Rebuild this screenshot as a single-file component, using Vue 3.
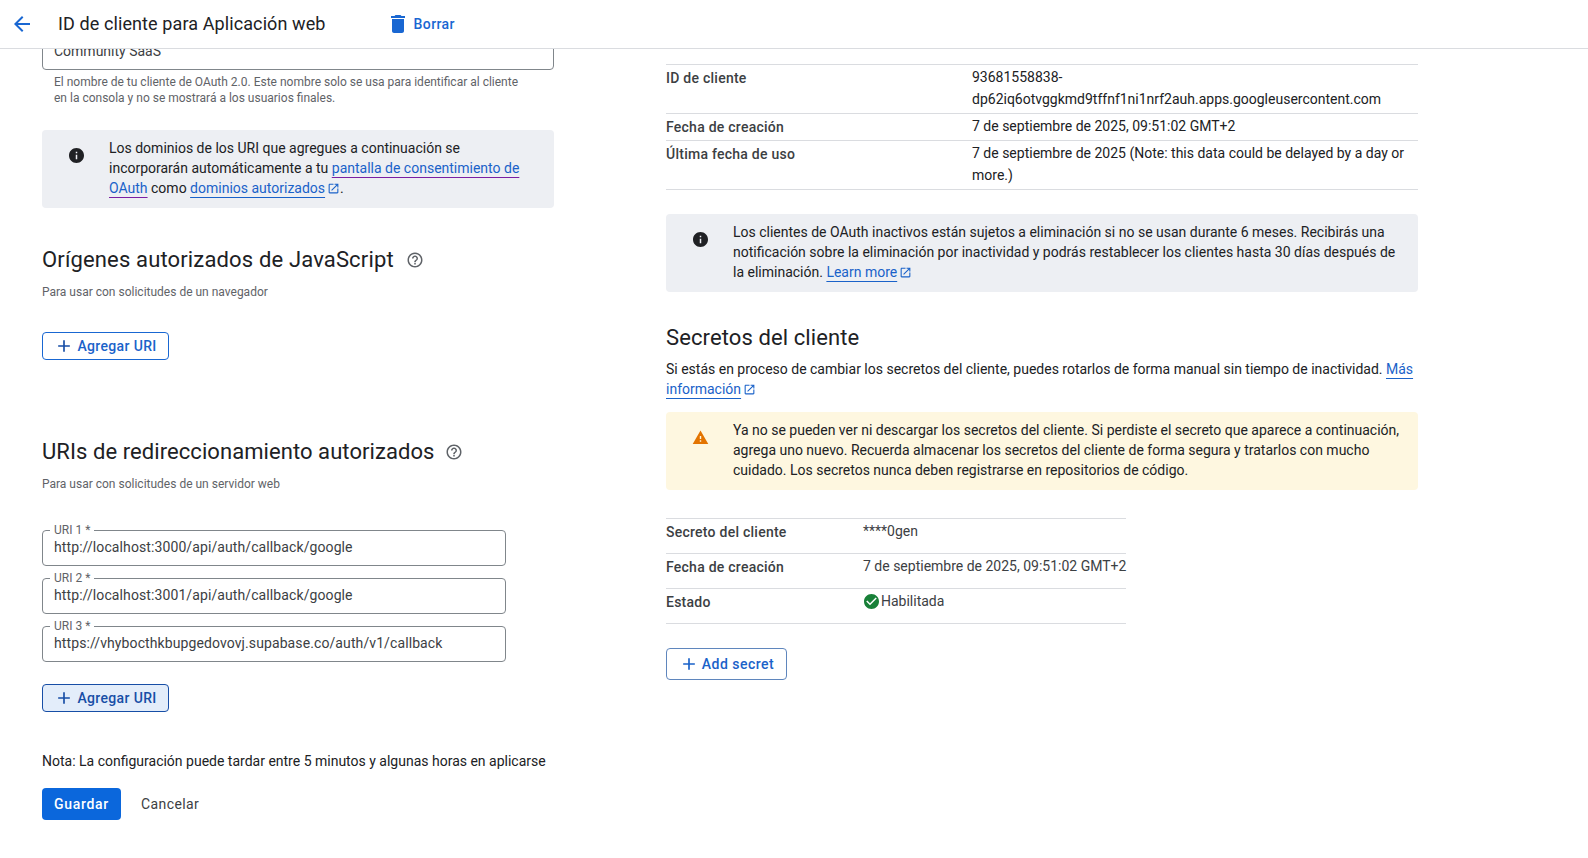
<template>
  <div class="page">
    <header class="topbar">
      <svg class="topbar__back" viewBox="0 0 24 24" aria-hidden="true"><path :d="icons.back" /></svg>
      <h1 class="topbar__title">ID de cliente para Aplicación web</h1>
      <button class="topbar__delete" type="button">
        <svg viewBox="0 0 24 24" aria-hidden="true"><path :d="icons.trash" /></svg>
        Borrar
      </button>
    </header>

    <main class="content">
      <section class="form">
        <div class="name-field">Community SaaS</div>
        <p class="hint">
          El nombre de tu cliente de OAuth 2.0. Este nombre solo se usa para identificar al cliente
          en la consola y no se mostrará a los usuarios finales.
        </p>

        <div class="notice">
          <svg class="notice__icon" viewBox="2 2 20 20" aria-hidden="true"><path :d="icons.info" /></svg>
          <p>
            Los dominios de los URI que agregues a continuación se incorporarán automáticamente a tu
            <a class="link link--visited">pantalla de consentimiento de OAuth</a> como
            <a class="link">dominios autorizados</a><svg class="external" viewBox="0 0 24 24" aria-hidden="true"><path :d="icons.external" /></svg>.
          </p>
        </div>

        <h2 class="heading heading--origins">
          Orígenes autorizados de JavaScript
          <svg class="heading__help" viewBox="0 0 24 24" aria-hidden="true"><path :d="icons.help" /></svg>
        </h2>
        <p class="sub">Para usar con solicitudes de un navegador</p>
        <button class="outline-btn outline-btn--first" type="button">
          <svg viewBox="0 0 24 24" aria-hidden="true"><path :d="icons.plus" /></svg>
          Agregar URI
        </button>

        <h2 class="heading heading--redirects">
          URIs de redireccionamiento autorizados
          <svg class="heading__help" viewBox="0 0 24 24" aria-hidden="true"><path :d="icons.help" /></svg>
        </h2>
        <p class="sub">Para usar con solicitudes de un servidor web</p>

        <div class="uris">
          <label v-for="(uri, i) in uris" :key="uri" class="uri">
            <span class="uri__label">URI {{ i + 1 }} *</span>
            <input class="uri__input" type="text" :value="uri" readonly />
          </label>
        </div>

        <button class="outline-btn outline-btn--active" type="button">
          <svg viewBox="0 0 24 24" aria-hidden="true"><path :d="icons.plus" /></svg>
          Agregar URI
        </button>

        <p class="note">Nota: La configuración puede tardar entre 5 minutos y algunas horas en aplicarse</p>

        <div class="actions">
          <button class="save-btn" type="button">Guardar</button>
          <button class="cancel-btn" type="button">Cancelar</button>
        </div>
      </section>

      <section class="details">
        <dl class="client-table">
          <template v-for="row in clientRows" :key="row.label">
            <dt>{{ row.label }}</dt>
            <dd>{{ row.value }}</dd>
          </template>
        </dl>

        <div class="notice">
          <svg class="notice__icon" viewBox="2 2 20 20" aria-hidden="true"><path :d="icons.info" /></svg>
          <p>
            Los clientes de OAuth inactivos están sujetos a eliminación si no se usan durante 6 meses. Recibirás una
            notificación sobre la eliminación por inactividad y podrás restablecer los clientes hasta 30 días después de
            la eliminación. <a class="link">Learn more</a><svg class="external" viewBox="0 0 24 24" aria-hidden="true"><path :d="icons.external" /></svg>
          </p>
        </div>

        <h2 class="heading heading--secrets">Secretos del cliente</h2>
        <p class="intro">
          Si estás en proceso de cambiar los secretos del cliente, puedes rotarlos de forma manual sin tiempo de
          inactividad. <a class="link">Más información</a><svg class="external" viewBox="0 0 24 24" aria-hidden="true"><path :d="icons.external" /></svg>
        </p>

        <div class="notice notice--warning">
          <svg class="notice__icon" viewBox="0 0 24 24" aria-hidden="true"><path :d="icons.warning" /></svg>
          <p>
            Ya no se pueden ver ni descargar los secretos del cliente. Si perdiste el secreto que aparece a continuación,
            agrega uno nuevo. Recuerda almacenar los secretos del cliente de forma segura y tratarlos con mucho
            cuidado. Los secretos nunca deben registrarse en repositorios de código.
          </p>
        </div>

        <dl class="secret-table">
          <dt>Secreto del cliente</dt>
          <dd>****0gen</dd>
          <dt>Fecha de creación</dt>
          <dd>7 de septiembre de 2025, 09:51:02 GMT+2</dd>
          <dt>Estado</dt>
          <dd class="status">
            <svg viewBox="2 2 20 20" aria-hidden="true"><path :d="icons.check" /></svg>
            Habilitada
          </dd>
        </dl>

        <button class="outline-btn outline-btn--secret" type="button">
          <svg viewBox="0 0 24 24" aria-hidden="true"><path :d="icons.plus" /></svg>
          Add secret
        </button>
      </section>
    </main>
  </div>
</template>

<script setup>
const icons = {
  back: 'M20 11H7.83l5.59-5.59L12 4l-8 8 8 8 1.41-1.41L7.83 13H20v-2z',
  trash: 'M6 19c0 1.1.9 2 2 2h8c1.1 0 2-.9 2-2V7H6v12zM19 4h-3.5l-1-1h-5l-1 1H5v2h14V4z',
  info: 'M12 2C6.48 2 2 6.48 2 12s4.48 10 10 10 10-4.48 10-10S17.52 2 12 2zm1 15h-2v-6h2v6zm0-8h-2V7h2v2z',
  help: 'M11 18h2v-2h-2v2zm1-16C6.48 2 2 6.48 2 12s4.48 10 10 10 10-4.48 10-10S17.52 2 12 2zm0 18c-4.41 0-8-3.59-8-8s3.59-8 8-8 8 3.59 8 8-3.59 8-8 8zm0-14c-2.21 0-4 1.79-4 4h2c0-1.1.9-2 2-2s2 .9 2 2c0 2-3 1.75-3 5h2c0-2.25 3-2.5 3-5 0-2.21-1.79-4-4-4z',
  external: 'M19 19H5V5h7V3H5c-1.11 0-2 .9-2 2v14c0 1.1.89 2 2 2h14c1.1 0 2-.9 2-2v-7h-2v7zM14 3v2h3.59l-9.83 9.83 1.41 1.41L19 6.41V10h2V3h-7z',
  warning: 'M1 21h22L12 2 1 21zm12-3h-2v-2h2v2zm0-4h-2v-4h2v4z',
  check: 'M12 2C6.48 2 2 6.48 2 12s4.48 10 10 10 10-4.48 10-10S17.52 2 12 2zm-2 15l-5-5 1.41-1.41L10 14.17l7.59-7.59L19 8l-9 9z',
  plus: 'M19 13h-6v6h-2v-6H5v-2h6V5h2v6h6v2z'
}

const uris = [
  'http://localhost:3000/api/auth/callback/google',
  'http://localhost:3001/api/auth/callback/google',
  'https://vhybocthkbupgedovovj.supabase.co/auth/v1/callback'
]

const clientRows = [
  { label: 'ID de cliente', value: '93681558838-dp62iq6otvggkmd9tffnf1ni1nrf2auh.apps.googleusercontent.com' },
  { label: 'Fecha de creación', value: '7 de septiembre de 2025, 09:51:02 GMT+2' },
  { label: 'Última fecha de uso', value: '7 de septiembre de 2025 (Note: this data could be delayed by a day or more.)' }
]
</script>

<style>
html, body { margin: 0; background: #fff; overflow: hidden; }
</style>

<style scoped>
.page { height: 858px; display: flex; flex-direction: column; overflow: hidden; font-family: Roboto, "Liberation Sans", sans-serif; font-size: 14px; line-height: 20px; color: #202124; }
svg { fill: currentColor; flex: none; }
p, h1, h2, dl, dd { margin: 0; }
button { font-family: inherit; cursor: pointer; }

/* barra superior */
.topbar { flex: none; height: 48px; border-bottom: 1px solid #dadce0; display: flex; align-items: center; background: #fff; position: relative; z-index: 1; }
.topbar__back { width: 24px; height: 24px; margin-left: 10px; color: #1967d2; }
.topbar__title { margin-left: 24px; font-size: 18px; font-weight: 400; line-height: 24px; letter-spacing: .1px; }
.topbar__delete { display: flex; align-items: center; gap: 4px; margin-left: 60px; padding: 0; border: 0; background: none; color: #1967d2; font-size: 14px; font-weight: 500; letter-spacing: .4px; }
.topbar__delete svg { width: 24px; height: 24px; }

.content { flex: 1; min-height: 0; display: grid; grid-template-columns: 512px 752px; column-gap: 112px; padding-left: 42px; align-items: start; }

/* columna izquierda */
.form { margin-top: -19px; display: flex; flex-direction: column; align-items: flex-start; }
.name-field { box-sizing: border-box; width: 100%; height: 40px; padding: 0 11px; line-height: 40px; border: 1px solid #80868b; border-radius: 4px; color: #3c4043; }
.hint { margin-top: 4px; padding: 0 24px 0 12px; font-size: 12px; line-height: 16px; color: #5f6368; }

.notice { box-sizing: border-box; width: 100%; display: flex; align-items: flex-start; padding: 8px 16px 10px 0; background: #edeff3; border-radius: 4px; color: #202124; }
.notice__icon { width: 15px; height: 15px; margin: 10px 25px 0 27px; }
.form .notice { margin-top: 24px; padding-right: 24px; }
.notice--warning { margin-top: 13px; background: #fef7e0; }
.notice--warning .notice__icon { width: 17px; height: 17px; margin: 9px 24px 0 26px; color: #e37400; }

.link { color: #1a62c9; text-decoration: underline; text-underline-offset: 4px; text-decoration-thickness: 1px; }
.link--visited { text-decoration-color: #7b1fa2; }
.external { width: 13px; height: 13px; margin-left: 2px; vertical-align: -2px; color: #1a62c9; }

.heading { display: flex; align-items: center; font-size: 22px; font-weight: 400; line-height: 32px; letter-spacing: .1px; color: #202124; }
.heading__help { width: 18px; height: 18px; margin-left: 12px; color: #5f6368; }
.heading--origins { margin-top: 36px; letter-spacing: .15px; }
.heading--redirects { margin-top: 76px; letter-spacing: .07px; }
.heading--redirects .heading__help { margin-left: 10px; }
.sub { margin-top: 8px; font-size: 12px; line-height: 16px; color: #5f6368; }

.outline-btn { display: inline-flex; align-items: center; justify-content: center; gap: 3px; box-sizing: border-box; height: 28px; width: 127px; padding: 0; background: #fff; border: 1px solid #1967d2; border-radius: 4px; color: #1a62c9; font-size: 14px; font-weight: 500; letter-spacing: .35px; }
.outline-btn svg { width: 20px; height: 20px; color: #174ea6; }
.outline-btn--first { margin-top: 32px; }
.outline-btn--active { margin-top: 22px; background: #e3edfa; border-color: #174ea6; color: #174ea6; }
.outline-btn--secret { width: 121px; height: 32px; margin-top: 24px; border-color: #5f86bd; letter-spacing: .5px; }
.outline-btn--secret svg { color: #1a62c9; }

.uris { width: 464px; margin-top: 38px; display: flex; flex-direction: column; gap: 12px; }
.uri { display: block; position: relative; }
.uri__label { position: absolute; left: 8px; top: -7px; padding: 0 4px; background: #fff; font-size: 12px; line-height: 14px; color: #5f6368; }
.uri__input { display: block; box-sizing: border-box; width: 100%; height: 36px; padding: 0 11px 2px; border: 1px solid #80868b; border-radius: 4px; outline: none; font: inherit; letter-spacing: .1px; color: #3c4043; }

.note { margin-top: 39px; }
.actions { margin-top: 17px; display: flex; align-items: center; gap: 20px; }
.save-btn { width: 79px; height: 32px; padding: 0; border: 0; border-radius: 4px; background: #0b67dc; color: #fff; font-size: 14px; font-weight: 500; letter-spacing: .7px; }
.cancel-btn { padding: 0; border: 0; background: none; color: #3c4043; font-size: 14px; font-weight: 400; letter-spacing: .4px; }

/* columna derecha */
.details { padding-top: 15px; display: flex; flex-direction: column; align-items: flex-start; }
.client-table { width: 100%; display: grid; grid-template-columns: 306px 1fr; border-top: 1px solid #dadce0; line-height: 22px; }
.client-table dt, .client-table dd { padding: 2px 0; border-bottom: 1px solid #dadce0; overflow-wrap: anywhere; }
.client-table dd { padding: 1px 0 3px; }
.client-table dt, .secret-table dt { font-weight: 500; letter-spacing: .25px; color: #3c4043; }
.details > .notice { margin-top: 24px; }
.details > .notice--warning { margin-top: 13px; }
.heading--secrets { margin-top: 30px; }
.intro { margin-top: 5px; }
.secret-table { margin-top: 28px; width: 460px; display: grid; grid-template-columns: 197px 1fr; border-top: 1px solid #dadce0; }
.secret-table dt, .secret-table dd { padding: 3px 0 11px; border-bottom: 1px solid #dadce0; white-space: nowrap; }
.secret-table dd { color: #3c4043; padding: 2px 0 12px; }
.status { display: flex; align-items: center; gap: 2px; }
.status svg { width: 15px; height: 15px; margin-left: 1px; color: #188038; }
</style>
